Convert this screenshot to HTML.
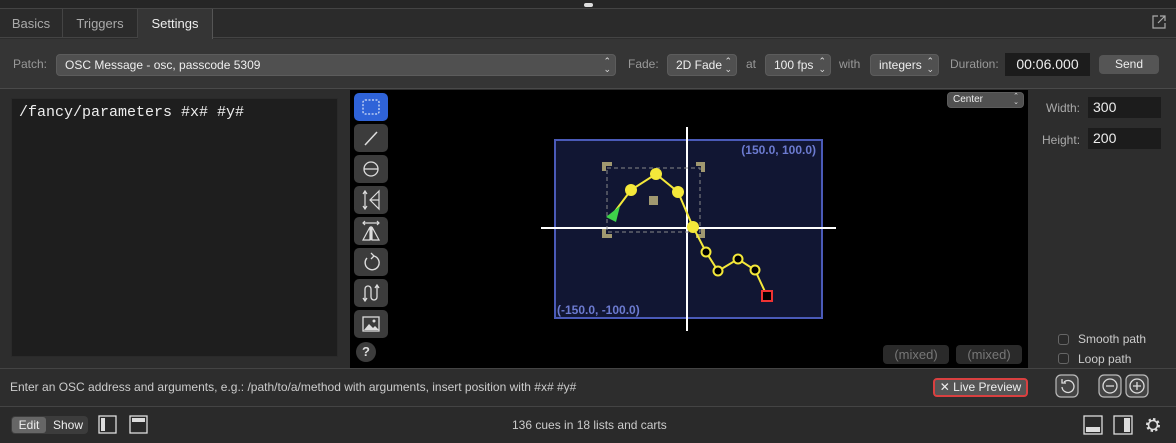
<!DOCTYPE html>
<html><head><style>
*{box-sizing:border-box;margin:0;padding:0}
body{width:1176px;height:443px;background:#2d2d2d;font-family:"Liberation Sans",sans-serif;font-size:12px;color:#ddd;position:relative;overflow:hidden}
.a{position:absolute}
.pop{position:absolute;background:#505050;border:1px solid #5c5c5c;border-radius:4px;color:#eee;font-size:12px;line-height:20px;padding-left:8px}
.arr{position:absolute;right:4px;top:2px;font-size:9px;line-height:8px;color:#ddd;text-align:center}
.lbl{position:absolute;color:#999;font-size:12px}
.tb{position:absolute;left:354px;width:34px;height:28px;background:#3c3c3c;border-radius:5px}
.tb svg{position:absolute;left:0;top:0}
</style></head><body>
<div class="a" style="left:0;top:0;width:1176px;height:9px;background:#262626;border-bottom:1px solid #444"></div>
<div class="a" style="left:584px;top:3px;width:9px;height:4px;background:#ddd;border-radius:2px"></div>
<div class="a" style="left:0;top:9px;width:1176px;height:29px;background:#2b2b2b;border-bottom:1px solid #444"></div>
<div class="a" style="left:0;top:9px;width:63px;height:29px;border-right:1px solid #444;color:#aaa;font-size:13px;line-height:29px;text-align:center">Basics</div>
<div class="a" style="left:63px;top:9px;width:75px;height:29px;border-right:1px solid #444;color:#aaa;font-size:13px;line-height:29px;text-align:center">Triggers</div>
<div class="a" style="left:138px;top:9px;width:75px;height:30px;background:#353535;border-right:1px solid #555;color:#eee;font-size:13px;line-height:29px;text-align:center">Settings</div>
<svg class="a" style="left:1152px;top:15px" width="14" height="14"><path d="M6 1H1v12h12V8M8 1h5v5M13 1L6 8" stroke="#aaa" fill="none" stroke-width="1.2"/></svg>
<div class="a" style="left:0;top:39px;width:1176px;height:50px;background:#353535;border-bottom:1px solid #4a4a4a"></div>
<div class="lbl" style="left:13px;top:57px">Patch:</div>
<div class="pop" style="left:56px;top:54px;width:560px">OSC Message - osc, passcode 5309<span class="arr">⌃<br>⌄</span></div>
<div class="lbl" style="left:628px;top:57px">Fade:</div>
<div class="pop" style="left:667px;top:54px;width:70px">2D Fade<span class="arr">⌃<br>⌄</span></div>
<div class="lbl" style="left:746px;top:57px">at</div>
<div class="pop" style="left:765px;top:54px;width:66px">100 fps<span class="arr">⌃<br>⌄</span></div>
<div class="lbl" style="left:839px;top:57px">with</div>
<div class="pop" style="left:870px;top:54px;width:69px">integers<span class="arr">⌃<br>⌄</span></div>
<div class="lbl" style="left:950px;top:57px">Duration:</div>
<div class="a" style="left:1005px;top:53px;width:85px;height:23px;background:#1c1c1c;color:#eee;font-size:14px;line-height:23px;text-align:center">00:06.000</div>
<div class="a" style="left:1099px;top:55px;width:60px;height:19px;background:#555;border-radius:4px;color:#eee;text-align:center;line-height:19px">Send</div>
<div class="a" style="left:11px;top:98px;width:327px;height:259px;background:#1e1e1e;border:1px solid #2a2a2a"></div>
<div class="a" style="left:19px;top:104px;font-family:'Liberation Mono',monospace;font-size:15px;color:#eee">/fancy/parameters #x# #y#</div>
<div class="a" style="left:350px;top:90px;width:678px;height:278px;background:#000"></div>
<div class="tb" style="top:93px;background:#2f63d8"><svg width="34" height="28"><rect x="9" y="7" width="16" height="14" rx="2" stroke="#fff" fill="none" stroke-dasharray="2 1.5"/></svg></div>
<div class="tb" style="top:124px"><svg width="34" height="28"><path d="M11 21L23 8" stroke="#ddd" stroke-width="1.5"/></svg></div>
<div class="tb" style="top:155px"><svg width="34" height="28"><circle cx="17" cy="14" r="7" stroke="#ddd" fill="none" stroke-width="1.3"/><path d="M10 14h14" stroke="#ddd" stroke-width="1.3"/></svg></div>
<div class="tb" style="top:186px"><svg width="34" height="28"><path d="M11 5v18M9 8l2-3 2 3M9 20l2 3 2-3M25 5L16 14l9 9zM25 14H16" stroke="#ddd" fill="none" stroke-width="1.2"/></svg></div>
<div class="tb" style="top:217px"><svg width="34" height="28"><path d="M9 6h16M11 4l-2 2 2 2M23 4l2 2-2 2M17 9v14M16 10L9 23h7zM18 10l7 13h-7z" stroke="#ddd" fill="none" stroke-width="1.2"/></svg></div>
<div class="tb" style="top:248px"><svg width="34" height="28"><path d="M20 8a7 7 0 1 1-7 2" stroke="#ddd" fill="none" stroke-width="1.4"/><path d="M17 5l3 3-3 3" stroke="#ddd" fill="none" stroke-width="1.3"/></svg></div>
<div class="tb" style="top:279px"><svg width="34" height="28"><path d="M11 22V10a3 3 0 0 1 6 0v8a3 3 0 0 0 6 0V6M9 19l2 3 2-3M21 9l2-3 2 3" stroke="#ddd" fill="none" stroke-width="1.3"/></svg></div>
<div class="tb" style="top:310px"><svg width="34" height="28"><rect x="9" y="7" width="16" height="14" stroke="#ddd" fill="none" stroke-width="1.3"/><path d="M10 20l5-6 4 4 2-2 4 4z" fill="#ddd"/><circle cx="20" cy="11" r="1.5" fill="#ddd"/></svg></div>
<div class="a" style="left:356px;top:342px;width:20px;height:20px;border-radius:50%;background:#3c3c3c;color:#ddd;font-weight:bold;text-align:center;line-height:20px;font-size:13px">?</div>
<div class="pop" style="left:947px;top:92px;width:77px;height:16px;line-height:14px;font-size:10px;padding-left:5px">Center<span class="arr" style="top:1px;font-size:7px;line-height:6px">⌃<br>⌄</span></div>
<svg class="a" style="left:350px;top:90px" width="678" height="278">
<rect x="205" y="50" width="267" height="178" fill="#111633" stroke="#4a5ab8" stroke-width="2"/>
<text x="466" y="64" fill="#6c7bd0" font-size="12" font-weight="bold" text-anchor="end" font-family="Liberation Sans">(150.0, 100.0)</text>
<text x="207" y="224" fill="#6c7bd0" font-size="12" font-weight="bold" font-family="Liberation Sans">(-150.0, -100.0)</text>
<path d="M337 37v204M191 138h295" stroke="#fff" stroke-width="2"/>
<rect x="257" y="78" width="93" height="64" fill="none" stroke="#888" stroke-dasharray="4 3"/>
<path d="M254 81v-7h8M346 74h7v8M254 139v7h8M346 146h7v-7" stroke="#a09870" stroke-width="4" fill="none"/>
<rect x="299" y="106" width="9" height="9" fill="#a09870"/>
<path d="M263 124L281 100L306 84L328 102L343 137L356 162L368 181L388 169L405 180L417 206" stroke="#f4e83a" stroke-width="2" fill="none"/>
<path d="M256 127L270 116L266 132z" fill="#3ed24a"/>
<circle cx="281" cy="100" r="6" fill="#f4e83a"/><circle cx="306" cy="84" r="6" fill="#f4e83a"/><circle cx="328" cy="102" r="6" fill="#f4e83a"/><circle cx="343" cy="137" r="6" fill="#f4e83a"/>
<g fill="#000" stroke="#f4e83a" stroke-width="2"><circle cx="356" cy="162" r="4.5"/><circle cx="368" cy="181" r="4.5"/><circle cx="388" cy="169" r="4.5"/><circle cx="405" cy="180" r="4.5"/></g>
<rect x="412" y="201" width="10" height="10" fill="#000" stroke="#e33" stroke-width="2"/>
</svg>
<div class="a" style="left:883px;top:345px;width:66px;height:19px;background:#2a2a2a;border-radius:4px;color:#777;text-align:center;line-height:19px;font-size:13px">(mixed)</div>
<div class="a" style="left:956px;top:345px;width:66px;height:19px;background:#2a2a2a;border-radius:4px;color:#777;text-align:center;line-height:19px;font-size:13px">(mixed)</div>
<div class="lbl" style="left:1046px;top:101px;color:#aaa">Width:</div>
<div class="a" style="left:1088px;top:97px;width:73px;height:21px;background:#1c1c1c;color:#eee;font-size:14px;line-height:21px;padding-left:5px">300</div>
<div class="lbl" style="left:1042px;top:133px;color:#aaa">Height:</div>
<div class="a" style="left:1088px;top:128px;width:73px;height:21px;background:#1c1c1c;color:#eee;font-size:14px;line-height:21px;padding-left:5px">200</div>
<div class="a" style="left:1058px;top:334px;width:11px;height:11px;border:1px solid #666;border-radius:3px;background:#2a2a2a"></div>
<div class="a" style="left:1078px;top:332px;color:#ccc">Smooth path</div>
<div class="a" style="left:1058px;top:353px;width:11px;height:11px;border:1px solid #666;border-radius:3px;background:#2a2a2a"></div>
<div class="a" style="left:1078px;top:352px;color:#ccc">Loop path</div>
<div class="a" style="left:0;top:368px;width:1176px;height:1px;background:#444"></div>
<div class="a" style="left:10px;top:380px;color:#ccc;font-size:12px">Enter an OSC address and arguments, e.g.: /path/to/a/method with arguments, insert position with #x# #y#</div>
<div class="a" style="left:933px;top:378px;width:95px;height:19px;background:#555;border:2px solid #d94040;border-radius:4px;color:#eee;text-align:center;line-height:15px">✕ Live Preview</div>
<svg class="a" style="left:1055px;top:374px" width="95" height="24"><g stroke="#bbb" fill="#444" stroke-width="1.2"><rect x="1" y="1" width="22" height="22" rx="5"/><rect x="44" y="1" width="22" height="22" rx="5"/><rect x="71" y="1" width="22" height="22" rx="5"/></g>
<g stroke="#ddd" fill="none" stroke-width="1.3"><path d="M9 8a6 6 0 1 1-2 5M7 5v4h4"/><circle cx="55" cy="12" r="7"/><path d="M51 12h8"/><circle cx="82" cy="12" r="7"/><path d="M78 12h8M82 8v8"/></g></svg>
<div class="a" style="left:0;top:406px;width:1176px;height:1px;background:#444"></div>
<div class="a" style="left:0;top:407px;width:1176px;height:36px;background:#2a2a2a"></div>
<div class="a" style="left:11px;top:416px;width:77px;height:18px;border-radius:4px;background:#3c3c3c"></div>
<div class="a" style="left:12px;top:417px;width:34px;height:16px;border-radius:3px;background:#666;color:#eee;text-align:center;line-height:16px">Edit</div>
<div class="a" style="left:53px;top:418px;color:#eee">Show</div>
<svg class="a" style="left:98px;top:414px" width="60" height="22"><g stroke="#ddd" stroke-width="1.3" fill="none"><rect x="1" y="2" width="17" height="17"/><rect x="32" y="2" width="17" height="17"/></g><rect x="3" y="4" width="4" height="13" fill="#ddd"/><rect x="34" y="4" width="13" height="4" fill="#ddd"/></svg>
<div class="a" style="left:512px;top:418px;color:#ccc">136 cues in 18 lists and carts</div>
<svg class="a" style="left:1082px;top:413px" width="90" height="24"><g stroke="#ddd" stroke-width="1.3" fill="none"><rect x="2" y="3" width="18" height="18"/><rect x="32" y="3" width="18" height="18"/></g><rect x="4" y="14" width="14" height="5" fill="#ddd"/><rect x="42" y="5" width="6" height="14" fill="#ddd"/>
<g transform="translate(71 12)"><circle r="5.5" stroke="#ddd" stroke-width="3" fill="none" stroke-dasharray="2.2 2.1"/><circle r="4.5" stroke="#ddd" stroke-width="1.6" fill="none"/></g></svg>
</body></html>
